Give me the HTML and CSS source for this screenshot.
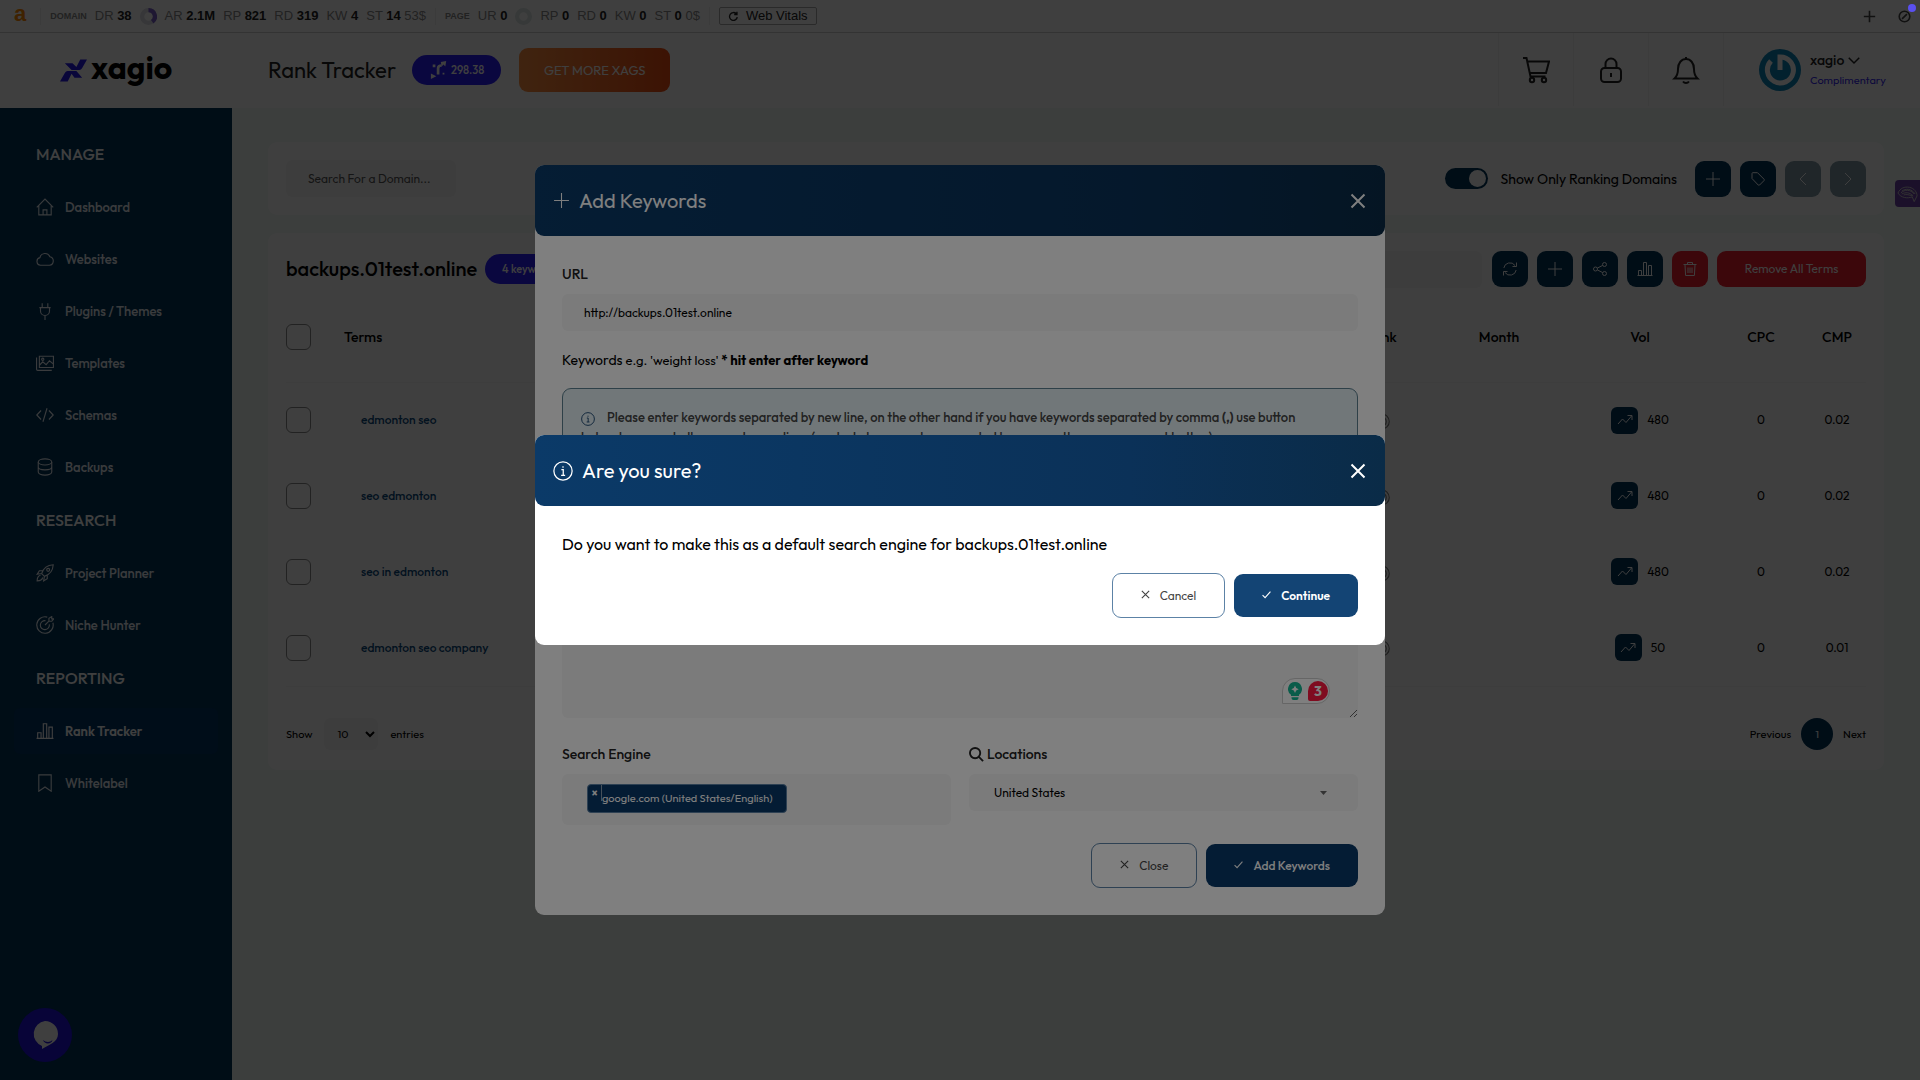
FILE: index.html
```html
<!DOCTYPE html>
<html lang="en">
<head>
<meta charset="utf-8">
<meta name="viewport" content="width=device-width, initial-scale=1">
<title>Rank Tracker</title>
<link rel="stylesheet" href="styles.css">
</head>
<body>
<svg class="sprite" aria-hidden="true">
  <symbol id="plus" viewBox="0 0 16 16"><path d="M8 1v14M1 8h14"/></symbol>
  <symbol id="x" viewBox="0 0 16 16"><path d="M1.500 1.500l13 13M14.500 1.500l-13 13"/></symbol>
  <symbol id="check" viewBox="0 0 16 16"><path d="M1 9l4.500 4.500L15 3"/></symbol>
  <symbol id="info" viewBox="0 0 16 16"><circle cx="8" cy="8" r="7.3"/><path d="M6.700 6.900h1.500v4.300M6.500 11.400h3.200M8 4.200v1.200"/></symbol>
  <symbol id="left" viewBox="0 0 16 16"><path d="M11 2L5 8l6 6"/></symbol>
  <symbol id="right" viewBox="0 0 16 16"><path d="M5 2l6 6-6 6"/></symbol>
  <symbol id="down" viewBox="0 0 16 16"><path d="M1 5l7 7 7-7"/></symbol>
  <symbol id="tag" viewBox="0 0 16 16"><path d="M2 2.500A.8.8 0 0 1 2.800 1.700L7.500 1.700 14 8.200a1 1 0 0 1 0 1.400L9.600 14a1 1 0 0 1-1.400 0L2 7.500z" /></symbol>
  <symbol id="refresh" viewBox="0 0 16 16"><path d="M1.800 7A6.200 6.200 0 0 1 13 4.500M14.200 9A6.200 6.200 0 0 1 3 11.500"/><path d="M14.500 1.500v4h-4M1.500 14.500v-4h4"/></symbol>
  <symbol id="share" viewBox="0 0 16 16"><circle cx="3.500" cy="8" r="2"/><circle cx="12.500" cy="3.500" r="2"/><circle cx="12.500" cy="12.500" r="2"/><path d="M5.300 7.100l5.400-2.700M5.300 8.900l5.400 2.700"/></symbol>
  <symbol id="bars" viewBox="0 0 16 16"><path d="M1.500 9.500h3v5h-3zM6.500 1.500h3v13h-3zM11.500 4.500h3v10h-3zM.5 14.500h15"/></symbol>
  <symbol id="trash" viewBox="0 0 16 16"><path d="M3 4l.6 10.500h8.800L13 4M1.500 3.500h13M5.500 3.500v-2h5v2M6 6.500v5.500M8 6.500v5.500M10 6.500v5.500"/></symbol>
  <symbol id="house" viewBox="0 0 16 16"><path d="M.7 8.300L8 1l7.300 7.300M2.500 6.800v8.200h11V6.800M6.300 15v-4.500h3.400V15"/></symbol>
  <symbol id="cloud" viewBox="0 0 16 16"><path d="M4 13.500a3.400 3.400 0 0 1-.5-6.700A4.600 4.600 0 0 1 12.300 6a3.800 3.800 0 0 1-.3 7.500z"/></symbol>
  <symbol id="plug" viewBox="0 0 16 16"><path d="M5.500 1v4M10.500 1v4M3 5h10M4 5v3a4 4 0 0 0 8 0V5M8 12v4"/></symbol>
  <symbol id="images" viewBox="0 0 16 16"><path d="M3 2h12.500v10H3zM.5 3v10.500a1 1 0 0 0 1 1H14M3 10l3-3 3 2.500L12 6l3.500 3"/><circle cx="6" cy="4.700" r="1"/></symbol>
  <symbol id="code" viewBox="0 0 16 16"><path d="M4.500 4L.7 8l3.800 4M11.500 4l3.800 4-3.800 4M9.800 2L6.200 14"/></symbol>
  <symbol id="database" viewBox="0 0 16 16"><ellipse cx="8" cy="3.500" rx="6" ry="2.700"/><path d="M2 3.500v9c0 1.500 2.700 2.700 6 2.700s6-1.200 6-2.700v-9M2 8c0 1.500 2.700 2.500 6 2.500S14 9.500 14 8"/></symbol>
  <symbol id="rocket" viewBox="0 0 16 16"><path d="M5 8.500C6.500 4 10 1 15.300.7 15 6 12 9.500 7.500 11zM6 6H3L1 9.200l4-.7M10 10v3l-3.200 2 .7-4M4 10c-2 .5-3 3-3 5 2 0 4.500-1 5-3"/><circle cx="10.800" cy="5.200" r="1.300"/></symbol>
  <symbol id="target" viewBox="0 0 16 16"><path d="M15 6a7.300 7.300 0 1 1-5-5M11.800 7.500A4 4 0 1 1 8.500 4.200M8 8l3.500-3.500V2L14 .5v2h1.800L14 4.700h-2.500"/></symbol>
  <symbol id="badge" viewBox="0 0 16 16"><circle cx="8" cy="8" r="7.300"/><circle cx="8" cy="8" r="4.500"/><path d="M8 6v4"/></symbol>
  <symbol id="bookmark" viewBox="0 0 16 16"><path d="M2.500.8h11v14.500L8 11.500l-5.500 3.800z"/></symbol>
  <symbol id="trend" viewBox="0 0 16 16"><path d="M1 12l4.500-5 3.500 3.500L14.500 4M10.500 3.500h4.500V8"/></symbol>
  <symbol id="cart" viewBox="0 0 28 28"><path d="M1 2h3.500l4 18.500h15M5.300 5.500H27l-3 11.500H8"/><circle cx="10" cy="24" r="2.200"/><circle cx="22" cy="24" r="2.200"/></symbol>
  <symbol id="lock" viewBox="0 0 28 28"><rect x="4" y="12" width="20" height="14" rx="3.500"/><path d="M8.500 12V8a5.500 5.500 0 0 1 11 0v4M14 17v4"/></symbol>
  <symbol id="bell" viewBox="0 0 28 28"><path d="M14 1v1.500M2.500 22.500c2.700-2.500 3.500-5 3.500-9.500 0-6 3.500-10 8-10s8 4 8 10c0 4.500.8 7 3.500 9.500zM11 25.500c1.500 2 4.500 2 6 0"/></symbol>
  <symbol id="search" viewBox="0 0 16 16"><circle cx="6.500" cy="6.500" r="5.500"/><path d="M10.500 10.500L15 15"/></symbol>
  <symbol id="reload" viewBox="0 0 16 16"><path d="M13.500 9A5.700 5.700 0 1 1 12 4M13 1v4H9"/></symbol>
  <symbol id="slash" viewBox="0 0 16 16"><circle cx="8" cy="8" r="6.500"/><path d="M5 11l6-6"/></symbol>
</svg>

<div class="seobar">
  <span class="seo-logo">a</span>
  <div class="seo-group">
    <small>DOMAIN</small>
    <span>DR <b>38</b></span>
    <svg class="ring" viewBox="0 0 16 16"><circle cx="8" cy="8" r="6" stroke="#dcdce4"/><path d="M8 2a6 6 0 0 1 3.500 10.900" stroke="#7a5cc8"/></svg>
    <span>AR <b>2.1M</b></span><span>RP <b>821</b></span><span>RD <b>319</b></span><span>KW <b>4</b></span><span>ST <b>14</b> 53$</span>
  </div>
  <div class="seo-group">
    <small>PAGE</small>
    <span>UR <b>0</b></span>
    <svg class="ring" viewBox="0 0 16 16"><circle cx="8" cy="8" r="6" stroke="#dce6e4"/></svg>
    <span>RP <b>0</b></span><span>RD <b>0</b></span><span>KW <b>0</b></span><span>ST <b>0</b> 0$</span>
  </div>
  <div class="seo-group">
    <button class="vitals" type="button"><svg class="icon"><use href="#reload"/></svg>Web Vitals</button>
  </div>
  <div class="seo-end">
    <svg class="icon"><use href="#plus"/></svg>
    <svg class="icon"><use href="#slash"/></svg>
  </div>
</div>

<header class="header">
  <a class="logo" href="#" aria-label="xagio">
    <svg class="logo-mark" viewBox="0 0 28 24"><path d="M5 5h8l4 4 4-8h7l-5 9q-1 2-3 2h-8zM0 24l5-9q1-2 3-2h9l6 7h-8l-3-4-4 8z"/></svg>
    <span>xagio</span>
  </a>
  <h1>Rank Tracker</h1>
  <span class="pill credits"><svg class="xag" viewBox="0 0 20 20"><path class="line" d="M9 15V8q0-3 4-3"/><path d="M12 1l6-1-1 6-2-2-2 2zM1 14l6 3-6 3zM3 4h3v3H3zM14 13h2v2h-2z"/></svg>298.38</span>
  <button class="get-more" type="button">GET MORE XAGS</button>
  <nav class="header-icons" aria-label="Account">
    <a href="#" aria-label="Cart"><svg><use href="#cart"/></svg></a>
    <a href="#" aria-label="Security"><svg><use href="#lock"/></svg></a>
    <a href="#" aria-label="Notifications"><svg><use href="#bell"/></svg></a>
  </nav>
  <div class="profile">
    <svg class="avatar" viewBox="0 0 42 42"><circle cx="21" cy="21" r="21" fill="#0b84b8"/><path d="M12 12A13 13 0 1 0 21 8v13" fill="none" stroke="#fff" stroke-width="5"/></svg>
    <div><b>xagio <svg class="icon"><use href="#down"/></svg></b><a href="#">Complimentary</a></div>
  </div>
</header>

<div class="shell">
  <nav class="sidebar" aria-label="Main">
    <h2>MANAGE</h2>
    <a href="#"><svg class="icon"><use href="#house"/></svg>Dashboard</a>
    <a href="#"><svg class="icon"><use href="#cloud"/></svg>Websites</a>
    <a href="#"><svg class="icon"><use href="#plug"/></svg>Plugins / Themes</a>
    <a href="#"><svg class="icon"><use href="#images"/></svg>Templates</a>
    <a href="#"><svg class="icon"><use href="#code"/></svg>Schemas</a>
    <a href="#"><svg class="icon"><use href="#database"/></svg>Backups</a>
    <h2>RESEARCH</h2>
    <a href="#"><svg class="icon"><use href="#rocket"/></svg>Project Planner</a>
    <a href="#"><svg class="icon"><use href="#target"/></svg>Niche Hunter</a>
    <h2>REPORTING</h2>
    <a class="active" href="#"><svg class="icon"><use href="#bars"/></svg>Rank Tracker</a>
    <a href="#"><svg class="icon"><use href="#bookmark"/></svg>Whitelabel</a>
  </nav>

  <main class="main">
    <section class="card filters">
      <input class="field domain-search" type="text" placeholder="Search For a Domain..." aria-label="Search for a domain">
      <div class="actions">
        <label class="switch"><input type="checkbox" checked><span class="track"></span>Show Only Ranking Domains</label>
        <button class="square" type="button" aria-label="Add"><svg class="icon"><use href="#plus"/></svg></button>
        <button class="square" type="button" aria-label="Tags"><svg class="icon"><use href="#tag"/></svg></button>
        <button class="square muted" type="button" aria-label="Previous page"><svg class="icon"><use href="#left"/></svg></button>
        <button class="square muted" type="button" aria-label="Next page"><svg class="icon"><use href="#right"/></svg></button>
      </div>
    </section>

    <section class="card">
      <div class="project">
        <h2>backups.01test.online</h2>
        <span class="pill">4 keywords</span>
        <input class="field project-search" type="text" aria-label="Search terms">
        <div class="actions">
          <button class="square" type="button" aria-label="Refresh"><svg class="icon"><use href="#refresh"/></svg></button>
          <button class="square" type="button" aria-label="Add keywords"><svg class="icon"><use href="#plus"/></svg></button>
          <button class="square" type="button" aria-label="Share"><svg class="icon"><use href="#share"/></svg></button>
          <button class="square" type="button" aria-label="Charts"><svg class="icon"><use href="#bars"/></svg></button>
          <button class="square danger" type="button" aria-label="Delete"><svg class="icon"><use href="#trash"/></svg></button>
          <button class="remove" type="button">Remove All Terms</button>
        </div>
      </div>

      <table class="terms">
        <colgroup><col class="c-check"><col><col class="c-rank"><col class="c-month"><col class="c-vol"><col class="c-cpc"><col class="c-cmp"></colgroup>
        <thead>
          <tr><th><input type="checkbox" aria-label="Select all"></th><th class="left">Terms</th><th>Rank</th><th>Month</th><th>Vol</th><th>CPC</th><th>CMP</th></tr>
        </thead>
        <tbody>
          <tr><td><input type="checkbox" aria-label="edmonton seo"></td><td class="term"><a href="#">edmonton seo</a></td><td><svg class="target"><use href="#badge"/></svg></td><td></td><td><span class="vol"><button type="button" aria-label="Trend"><svg class="icon"><use href="#trend"/></svg></button>480</span></td><td>0</td><td>0.02</td></tr>
          <tr><td><input type="checkbox" aria-label="seo edmonton"></td><td class="term"><a href="#">seo edmonton</a></td><td><svg class="target"><use href="#badge"/></svg></td><td></td><td><span class="vol"><button type="button" aria-label="Trend"><svg class="icon"><use href="#trend"/></svg></button>480</span></td><td>0</td><td>0.02</td></tr>
          <tr><td><input type="checkbox" aria-label="seo in edmonton"></td><td class="term"><a href="#">seo in edmonton</a></td><td><svg class="target"><use href="#badge"/></svg></td><td></td><td><span class="vol"><button type="button" aria-label="Trend"><svg class="icon"><use href="#trend"/></svg></button>480</span></td><td>0</td><td>0.02</td></tr>
          <tr><td><input type="checkbox" aria-label="edmonton seo company"></td><td class="term"><a href="#">edmonton seo company</a></td><td><svg class="target"><use href="#badge"/></svg></td><td></td><td><span class="vol"><button type="button" aria-label="Trend"><svg class="icon"><use href="#trend"/></svg></button>50</span></td><td>0</td><td>0.01</td></tr>
        </tbody>
      </table>

      <div class="table-foot">
        <label class="length">Show <select><option>10</option></select> entries</label>
        <div class="pager"><a href="#">Previous</a><a class="current" href="#">1</a><a href="#">Next</a></div>
      </div>
    </section>
  </main>
</div>

<button class="chat" type="button" aria-label="Open chat"><svg viewBox="0 0 26 28"><path d="M13 0a13 13 0 0 1 13 13c0 8-9 11-16 15v-3A13 13 0 0 1 13 0z" fill="#fff"/><path d="M11 19c3 2.500 7 2.500 9.500 0-.5 4-8 5-9.500 0z" fill="#2010e0"/></svg></button>
<button class="side-tab" type="button" aria-label="Assistant"><svg viewBox="0 0 22 18"><path d="M1 8c2-5 7-7 12-6 5 1 8 5 8 9l-3 6-2-5c-5 2-12 1-15-4zM4 8c4-4 10-4 14 1M5 9c4-2 8-2 12 2M7 10c3-1 6 0 9 1M5 6c4-3 10-3 14 3"/></svg></button>

<div class="overlay">
  <section class="modal" role="dialog" aria-labelledby="add-title">
    <header class="modal-head">
      <svg class="icon add-icon"><use href="#plus"/></svg><h2 id="add-title">Add Keywords</h2>
      <button class="modal-close" type="button" aria-label="Close dialog"><svg class="icon"><use href="#x"/></svg></button>
    </header>
    <form class="modal-body add-form">
      <label for="url">URL</label>
      <input class="field" id="url" type="text" value="http://backups.01test.online">
      <label class="keywords-label" for="keywords">Keywords <span>e.g. 'weight loss' <b>* hit enter after keyword</b></span></label>
      <div class="notice"><svg class="icon"><use href="#info"/></svg>Please enter keywords separated by new line, on the other hand if you have keywords separated by comma <b>(,)</b> use button<br>below to convert all comma to new lines (control above can be separated by comma then press convert button)</div>
      <div class="text-wrap">
        <textarea class="field" id="keywords"></textarea>
        <div class="checker">
          <svg viewBox="0 0 14 18"><path d="M7 0a7 7 0 0 1 4 12.700V14H3v-1.300A7 7 0 0 1 7 0zM3.500 15.300h7V16a2 2 0 0 1-2 2h-3a2 2 0 0 1-2-2z" fill="#14b894"/><path d="M7 3.500L8.200 6l2.500 1.200-2.500 1.200L7 11 5.800 8.400 3.300 7.200 5.800 6z" fill="#fff"/></svg>
          <span>3</span>
        </div>
      </div>
      <div class="columns">
        <div>
          <label for="engine">Search Engine</label>
          <div class="tokens field"><span class="token"><button type="button" aria-label="Remove google.com">×</button>google.com (United States/English)</span><input id="engine" type="text"></div>
        </div>
        <div>
          <label for="location"><svg class="icon"><use href="#search"/></svg>Locations</label>
          <select class="field location" id="location"><option>United States</option></select>
        </div>
      </div>
      <div class="buttons">
        <button class="btn outline" type="button"><svg class="icon"><use href="#x"/></svg>Close</button>
        <button class="btn primary" type="button"><svg class="icon"><use href="#check"/></svg>Add Keywords</button>
      </div>
    </form>
  </section>
</div>

<div class="overlay">
  <section class="modal" role="alertdialog" aria-labelledby="sure-title">
    <header class="modal-head">
      <svg class="icon"><use href="#info"/></svg><h2 id="sure-title">Are you sure?</h2>
      <button class="modal-close" type="button" aria-label="Close dialog"><svg class="icon"><use href="#x"/></svg></button>
    </header>
    <div class="modal-body confirm">
      <p>Do you want to make this as a default search engine for backups.01test.online</p>
      <div class="buttons">
        <button class="btn outline" type="button"><svg class="icon"><use href="#x"/></svg>Cancel</button>
        <button class="btn primary focused" type="button"><svg class="icon"><use href="#check"/></svg>Continue</button>
      </div>
    </div>
  </section>
</div>
<span class="notify-dot"></span>
</body>
</html>
```
FILE: styles.css
```css
* { box-sizing: border-box; }
body {
  margin: 0;
  min-height: 100vh;
  display: flex;
  flex-direction: column;
  background: #f0f8f4;
  color: #000;
  font: 14px/20px Outfit, Lato, sans-serif;
}
h1, h2, p { margin: 0; font-weight: 400; }
a { color: inherit; text-decoration: none; }
button, input, select, textarea { font: inherit; color: inherit; border: 0; margin: 0; padding: 0; }
svg { fill: none; stroke: currentColor; flex: none; }
.sprite { position: absolute; width: 0; height: 0; }
.icon { width: 16px; height: 16px; }

/* SEO toolbar */
.seobar {
  display: flex;
  align-items: center;
  height: 33px;
  padding: 0 9px 0 14px;
  background: #fff;
  border-bottom: 1px solid #ccc;
  color: #888;
  font: 13px/16px "Liberation Sans", Arial, sans-serif;
}
.seo-logo { color: #ff8800; font: bold 22px/20px "Liberation Sans", Arial, sans-serif; margin: 0 14px 4px 0; }
.seo-group { display: flex; align-items: center; gap: 8px; padding: 0 9px; border-left: 1px solid #eee; white-space: nowrap; }
.seo-group small { font-size: 9px; font-weight: bold; }
.seo-group b { color: #222; }
.ring { width: 17px; height: 17px; stroke-width: 4; }
.vitals { display: flex; align-items: center; gap: 7px; height: 18px; padding: 0 8px; background: #fff; border: 1px solid #aaa; border-radius: 2px; color: #222; }
.vitals .icon { width: 11px; height: 11px; stroke-width: 2; }
.seo-end { margin-left: auto; display: flex; gap: 22px; color: #444; }
.seo-end .icon { width: 13px; height: 13px; stroke-width: 2; }

/* Page header */
.header { display: flex; align-items: center; height: 75px; padding: 0 36px 2px 0; background: #fff; }
.logo { display: flex; align-items: center; gap: 4px; width: 268px; padding-left: 60px; font-size: 32px; line-height: 40px; font-weight: 700; }
.logo span { padding-bottom: 6px; }
.logo-mark { width: 27px; height: 24px; fill: #2418e8; stroke: none; }
h1 { font-size: 22px; line-height: 28px; color: #222; white-space: nowrap; }
.pill { display: flex; align-items: center; gap: 2px; height: 30px; padding: 0 17px; border-radius: 15px; background: #2a1cff; color: #fff; font-size: 11px; font-weight: 500; white-space: nowrap; }
.credits { margin: 0 18px 0 16px; }
.xag { width: 20px; height: 18px; fill: #fff; stroke: none; }
.xag .line { fill: none; stroke: #fff; stroke-width: 3; }
.get-more { height: 44px; width: 151px; border-radius: 9px; background: linear-gradient(90deg, #ff9040, #f04c10); color: #fff; font-size: 13px; }
.header-icons { margin-left: auto; display: flex; align-self: stretch; border-left: 1px solid #f2f2f2; }
.header-icons a { width: 75px; display: grid; place-items: center; border-right: 1px solid #f2f2f2; }
.header-icons svg { width: 28px; height: 28px; stroke-width: 2; color: #222; }
.profile { display: flex; align-items: center; gap: 9px; padding-left: 35px; }
.avatar { width: 42px; height: 42px; stroke: none; }
.profile b { display: flex; align-items: center; gap: 4px; font-size: 14px; font-weight: 500; color: #222; }
.profile .icon { width: 12px; height: 14px; stroke-width: 2; }
.profile a { display: block; width: 74px; color: #3a2cf0; font-size: 11px; }

/* Layout and navigation */
.shell { display: flex; flex: 1; }
.sidebar { flex: none; width: 232px; padding: 22px 14px; display: flex; flex-direction: column; gap: 6px; background: #00345a; color: #fff; }
.sidebar h2 { height: 48px; padding-left: 22px; font-size: 16px; line-height: 48px; font-weight: 500; }
.sidebar a { display: flex; align-items: center; gap: 11px; height: 46px; padding-left: 22px; border-radius: 6px; color: #e8eef4; font-weight: 500; font-size: 13px; }
.sidebar .icon { width: 18px; height: 18px; stroke-width: 1; }
.sidebar .active { background: #003464; color: #fff; font-weight: 600; }
.main { flex: 1; min-width: 0; padding: 34px 36px; display: flex; flex-direction: column; gap: 18px; }
.card { padding: 18px; border-radius: 9px; background: #fff; }

.field { height: 37px; padding: 0 22px; border-radius: 6px; background: #f7f7f7; font-size: 12px; }
.field::placeholder { color: #555; opacity: 1; }
.filters { display: flex; justify-content: space-between; align-items: center; }
.domain-search { width: 170px; }
.actions { display: flex; align-items: center; gap: 9px; }
.square { width: 36px; height: 36px; display: grid; place-items: center; border-radius: 9px; background: #00345a; color: #fff; }
.square.muted { background: #8099a6; }
.square.danger { background: #f01c2c; }
.remove { height: 36px; width: 149px; border-radius: 9px; background: #f01c2c; color: #fff; font-size: 12px; }
.switch { display: flex; align-items: center; gap: 12px; margin-right: 9px; font-size: 14px; }
.switch input { position: absolute; opacity: 0; }
.track { display: flex; justify-content: flex-end; align-items: center; width: 43px; height: 21px; padding: 2px; border-radius: 11px; background: #00345a; }
.track::after { content: ""; width: 17px; height: 17px; border-radius: 50%; background: #fff; }

.project { display: flex; align-items: center; height: 36px; }
.project h2 { margin-right: 8px; font-size: 20px; line-height: 28px; font-weight: 500; white-space: nowrap; }
.project-search { flex: 1; min-width: 0; margin: 0 10px 0 400px; }

/* Terms table */
.terms { width: 100%; margin-top: 15px; table-layout: fixed; border-collapse: collapse; text-align: center; font-size: 12px; }
.terms th, .terms td { padding: 0; height: 76px; }
.terms th { height: 80px; font-size: 14px; font-weight: 500; padding-bottom: 10px; }
.terms thead tr, .terms tbody tr:last-child { border-bottom: 1px solid #f4f4f4; }
.terms .left, .terms .term, .terms th:first-child, .terms td:first-child { text-align: left; }
.terms .term { padding-left: 17px; color: #0a4a7c; font-weight: 500; }
.terms input { display: block; appearance: none; width: 25px; height: 26px; border: 1px solid #888; border-radius: 6px; }
.c-check { width: 58px; }
.c-rank { width: 102px; }
.c-month { width: 134px; }
.c-vol { width: 148px; }
.c-cpc { width: 94px; }
.c-cmp { width: 58px; }
.target { width: 17px; height: 17px; color: #777; vertical-align: middle; }
.vol { display: inline-flex; align-items: center; gap: 9px; }
.vol button { display: grid; place-items: center; width: 27px; height: 27px; border-radius: 6px; background: #00345a; color: #fff; }
.table-foot { display: flex; justify-content: space-between; align-items: center; padding: 31px 0 2px; font-size: 11px; line-height: 32px; }
.length { display: flex; align-items: center; gap: 12px; }
.length select { height: 32px; width: 54px; padding-left: 9px; border-radius: 6px; background: #f7f7f7; }
.pager { display: flex; align-items: center; gap: 10px; }
.pager .current { width: 32px; height: 32px; border-radius: 50%; background: #00345a; color: #fff; text-align: center; }

/* Floating widgets */
.chat { position: fixed; left: 18px; bottom: 18px; width: 54px; height: 54px; display: grid; place-items: center; border-radius: 50%; background: #2010e0; }
.chat svg { width: 26px; height: 28px; stroke: none; }
.side-tab { position: fixed; right: 0; top: 180px; width: 25px; height: 27px; display: grid; place-items: center; border-radius: 4px 0 0 4px; background: #6c40a8; color: #ccc; }
.side-tab svg { width: 21px; height: 18px; }
.notify-dot { position: fixed; right: 4px; top: 4px; width: 8px; height: 8px; border-radius: 50%; background: #5a50f0; }

/* Dialogs */
.overlay { position: fixed; inset: 0; display: flex; align-items: center; justify-content: center; background: rgba(0, 0, 0, .5); }
.modal { width: 850px; max-width: 100%; border-radius: 9px; background: #fff; }
.modal-head { display: flex; align-items: center; gap: 9px; height: 71px; padding: 0 19px 0 18px; border-radius: 9px; background: linear-gradient(90deg, #0b3a68, #0b3158 70%, #0a2b47); color: #fff; }
.modal-head h2 { font-size: 20px; line-height: 28px; }
.modal-head .icon { width: 20px; height: 20px; }
.modal-head .add-icon { width: 17px; height: 17px; stroke-width: 1; }
.modal-close { margin-left: auto; background: none; display: grid; }
.modal-head .modal-close .icon { width: 16px; height: 16px; stroke-width: 2; }
.modal-body { padding: 27px; }
.buttons { display: flex; justify-content: flex-end; align-items: center; gap: 9px; }
.btn { display: flex; align-items: center; justify-content: center; gap: 10px; height: 43px; padding: 0 28px; border-radius: 9px; font-size: 12px; white-space: nowrap; }
.btn .icon { width: 9px; height: 9px; margin-bottom: 2px; stroke-width: 2; }
.outline { height: 45px; border: 1px solid #5c82a6; background: #fff; color: #444; }
.primary { background: #083868; color: #fff; font-weight: 500; }
.focused { background: #134474; font-weight: 600; }
.confirm p { font-size: 16px; line-height: 22px; }
.confirm .buttons { margin-top: 18px; }

.add-form > label, .columns label { display: flex; align-items: center; gap: 3px; height: 22px; margin-bottom: 9px; font-size: 14px; color: #222; font-weight: 500; }
.add-form > .field { display: block; width: 100%; }
.add-form > .keywords-label { display: block; margin: 18px 0 17px; line-height: 22px; color: #000; font-weight: 400; }
.keywords-label span { font-size: 13px; }
.notice { min-height: 79px; padding: 18px; border: 1px solid #5c8090; border-radius: 9px; background: #e3eff3; color: #444; font-size: 13px; font-weight: 500; }
.notice .icon { width: 14px; height: 14px; margin-right: 12px; vertical-align: middle; color: #0b3a68; }
.text-wrap { position: relative; height: 233px; margin: 18px 0 25px; }
.text-wrap textarea { display: block; width: 100%; height: 100%; }
.checker { position: absolute; right: 28px; bottom: 14px; display: flex; align-items: center; gap: 6px; height: 26px; padding: 0 1px 0 5px; border-radius: 13px 13px 13px 0; border: 1px solid #ccc; background: #fff; }
.checker svg { width: 14px; height: 18px; stroke: none; }
.checker span { width: 20px; height: 20px; border-radius: 10px 10px 10px 2px; background: #ff1840; color: #fff; font-weight: 700; text-align: center; }
.columns { display: grid; grid-template-columns: 1fr 1fr; gap: 18px; }
.columns .icon { width: 15px; height: 15px; stroke-width: 2; }
.tokens { display: flex; align-items: center; height: 51px; padding: 0 25px 3px; }
.tokens input { width: 0; flex: 1; background: none; }
.token { display: flex; align-items: center; height: 29px; padding-right: 13px; border: 1px solid #5c82a6; border-radius: 4px; background: #083868; color: #fff; font-size: 11px; white-space: nowrap; }
.token button { align-self: flex-start; width: 14px; height: 16px; border-right: 1px solid #8aa0b4; background: none; font-weight: 700; line-height: 16px; }
.location { width: 100%; padding: 0 25px; appearance: none; background: #f7f7f7 url("data:image/svg+xml,%3Csvg xmlns='http://www.w3.org/2000/svg' width='7' height='4'%3E%3Cpath d='M0 0h7L3.500 4z' fill='%23666'/%3E%3C/svg%3E") no-repeat right 31px center; }
.add-form .buttons { margin-top: 18px; }
```
